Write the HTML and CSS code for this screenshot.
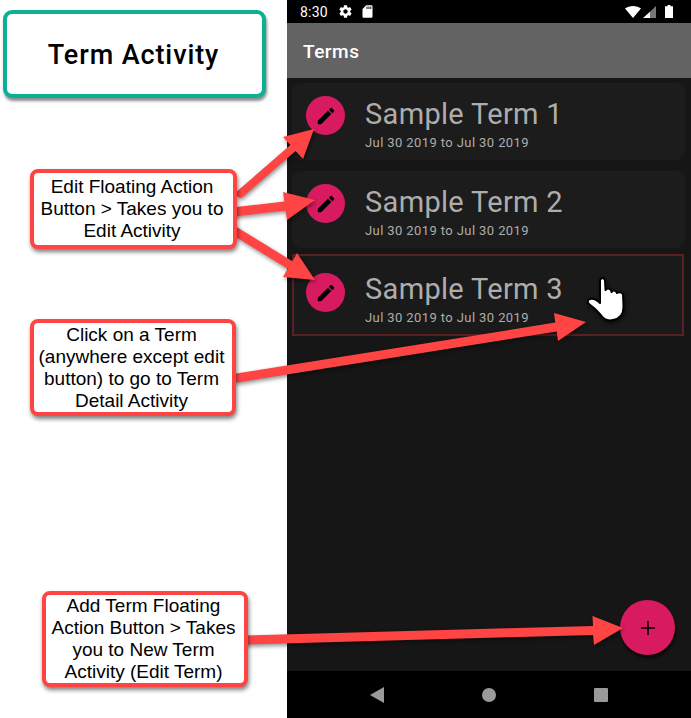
FILE: index.html
```html
<!DOCTYPE html>
<html lang="en">
<head>
<meta charset="utf-8">
<title>Term Activity</title>
<link rel="stylesheet" href="styles.css">
</head>
<body>
<div class="stage">
  <aside class="notes">
    <h1 class="title-box">Term Activity</h1>
    <p class="callout callout-edit">Edit Floating Action Button &gt; Takes you to Edit Activity</p>
    <p class="callout callout-click">Click on a Term (anywhere except edit button) to go to Term Detail Activity</p>
    <p class="callout callout-add">Add Term Floating Action Button &gt; Takes you to New Term Activity (Edit Term)</p>
  </aside>
  <main class="phone">
    <div class="status">
      <span class="time">8:30</span>
      <svg class="ic-gear" viewBox="0 0 24 24"><path d="M19.43 12.98c.04-.32.07-.64.07-.98s-.03-.66-.07-.98l2.11-1.65c.19-.15.24-.42.12-.64l-2-3.46c-.12-.22-.39-.3-.61-.22l-2.49 1c-.52-.4-1.08-.73-1.69-.98l-.38-2.65C14.46 2.18 14.25 2 14 2h-4c-.25 0-.46.18-.49.42l-.38 2.65c-.61.25-1.17.59-1.69.98l-2.49-1c-.23-.09-.49 0-.61.22l-2 3.46c-.13.22-.07.49.12.64l2.11 1.65c-.04.32-.07.65-.07.98s.03.66.07.98l-2.11 1.65c-.19.15-.24.42-.12.64l2 3.46c.12.22.39.3.61.22l2.49-1c.52.4 1.08.73 1.69.98l.38 2.65c.03.24.24.42.49.42h4c.25 0 .46-.18.49-.42l.38-2.65c.61-.25 1.17-.59 1.69-.98l2.49 1c.23.09.49 0 .61-.22l2-3.46c.12-.22.07-.49-.12-.64l-2.11-1.65zM12 15.5c-1.93 0-3.5-1.57-3.5-3.5s1.57-3.5 3.5-3.5 3.5 1.57 3.5 3.5-1.57 3.5-3.5 3.5z"/></svg>
      <svg class="ic-sd" viewBox="0 0 24 24"><path d="M18 2h-8L4 8v12c0 1.1.9 2 2 2h12c1.1 0 2-.9 2-2V4c0-1.1-.9-2-2-2zm-6 6h-1.5V4H12v4zm3 0h-1.5V4H15v4zm3 0h-1.5V4H18v4z"/></svg>
      <span class="status-gap"></span>
      <svg class="ic-wifi" viewBox="0 0 16 12"><path d="M0 2.6C2.2 1 5 0 8 0s5.800 1 8 2.600L8 12z"/></svg>
      <svg class="ic-signal" viewBox="0 0 13 12"><path class="sig-dim" d="M13 0v12H7V5.700z"/><path d="M7 5.700V12H0z"/></svg>
      <svg class="ic-batt" viewBox="0 0 8 13"><path d="M2.500 0h3v1.200H8V13H0V1.200h2.500z"/></svg>
    </div>
    <header class="appbar">Terms</header>
    <section class="list">
      <article class="card">
        <span class="edit"><svg viewBox="0 0 24 24"><path d="M3 17.250V21h3.750L17.810 9.940l-3.750-3.750L3 17.250zM20.710 7.040a1 1 0 0 0 0-1.410l-2.340-2.340a1 1 0 0 0-1.410 0l-1.830 1.830 3.750 3.750 1.830-1.830z"/></svg></span>
        <div class="card-text"><div class="term">Sample Term 1</div><div class="dates">Jul 30 2019 to Jul 30 2019</div></div>
      </article>
      <article class="card">
        <span class="edit"><svg viewBox="0 0 24 24"><path d="M3 17.250V21h3.750L17.810 9.940l-3.750-3.750L3 17.250zM20.710 7.040a1 1 0 0 0 0-1.410l-2.340-2.340a1 1 0 0 0-1.410 0l-1.830 1.830 3.750 3.750 1.830-1.830z"/></svg></span>
        <div class="card-text"><div class="term">Sample Term 2</div><div class="dates">Jul 30 2019 to Jul 30 2019</div></div>
      </article>
      <article class="card card-picked">
        <span class="edit"><svg viewBox="0 0 24 24"><path d="M3 17.250V21h3.750L17.810 9.940l-3.750-3.750L3 17.250zM20.710 7.040a1 1 0 0 0 0-1.410l-2.340-2.340a1 1 0 0 0-1.410 0l-1.830 1.830 3.750 3.750 1.830-1.830z"/></svg></span>
        <div class="card-text"><div class="term">Sample Term 3</div><div class="dates">Jul 30 2019 to Jul 30 2019</div></div>
      </article>
      <button class="fab" type="button"><svg viewBox="0 0 14 14"><path d="M6.200 0h1.600v6.200H14v1.600H7.800V14H6.200V7.800H0V6.200h6.200z"/></svg></button>
    </section>
    <nav class="navbar">
      <svg class="nav-ic" viewBox="0 0 16 16"><path d="M15 0v16L1 8z"/></svg>
      <svg class="nav-ic" viewBox="0 0 16 16"><circle cx="8" cy="8" r="7"/></svg>
      <svg class="nav-ic" viewBox="0 0 16 16"><rect x="1" y="1" width="14" height="14" rx="1"/></svg>
    </nav>
  </main>
  <svg class="overlay" viewBox="0 0 691 718">
    <g class="hand">
      <path d="M600 280Q602.500 276 605 280L605.500 290Q608 287 611 290L611.500 292Q614 289 616.500 292L617 293Q620 291 623 294L623.500 306Q624 318 613 320Q605 322 600 314Q596 309 589 304Q586 300 590 299Q595 298 600 303Z"/>
    </g>
    <g class="arrows">
      <path d="M237.400 191 290.400 145 283 137 314 129 303 159 295.600 151 242.600 197a4 4 0 0 1-5.200-6z"/>
      <path d="M232.400 207.500 284.400 201.500 283 192 315 200 287 220 285.600 210.500 233.600 216.500a4.500 4.500 0 0 1-1.200-9z"/>
      <path d="M235.300 226.200 292.300 261.200 297 253 315 280 283 277 287.700 268.800 230.700 233.800a4.500 4.500 0 0 1 4.600-7.600z"/>
      <path d="M236.300 373.600 555.300 322.600 554 313 586 322 558 341 556.700 331.400 237.700 382.400a4.500 4.500 0 0 1-1.400-8.800z"/>
      <path d="M246 635.500 593 626 592.500 616 623 628 594 645 593 635 246 644.500a4.500 4.500 0 0 1 0-9z"/>
    </g>
  </svg>
</div>
</body>
</html>
```
FILE: styles.css
```css
* { box-sizing: border-box; }
html, body { margin: 0; padding: 0; background: #fff; }
body { width: 691px; height: 718px; overflow: hidden; }

.stage {
  position: relative;
  display: grid;
  grid-template-columns: 287px 404px;
  width: 691px;
  height: 718px;
}

.notes { position: relative; background: #fff; }

.title-box {
  position: absolute;
  left: 3px;
  top: 10px;
  width: 263px;
  height: 88px;
  margin: 0;
  padding: 2px 2px 0 0;
  display: flex;
  align-items: center;
  justify-content: center;
  background: #fff;
  border: 4px solid #0bb193;
  border-radius: 9px;
  box-shadow: 1px 3px 3px rgba(0, 0, 0, .45);
  font: 500 27px/1 "Roboto", sans-serif;
  letter-spacing: .9px;
  color: #000;
}

.callout {
  position: absolute;
  z-index: 3;
  margin: 0;
  display: flex;
  align-items: center;
  justify-content: center;
  text-align: center;
  background: #fff;
  border: 4px solid #ff4444;
  border-radius: 8px;
  box-shadow: 1px 3px 4px rgba(0, 0, 0, .5);
  font: 400 19px/22px "Liberation Sans", sans-serif;
  color: #000;
}
.callout-edit { left: 30px; top: 169px; width: 207px; height: 80px; padding: 0 5px 0 2px; }
.callout-click { left: 30px; top: 319px; width: 206px; height: 97px; padding: 0 5px 0 2px; }
.callout-add { left: 42px; top: 591px; width: 206px; height: 96px; padding: 0 5px 0 2px; }

.phone {
  display: flex;
  flex-direction: column;
  height: 718px;
  background: #161616;
}

.status {
  flex: 0 0 23px;
  display: flex;
  align-items: center;
  padding: 0 18px 0 13px;
  background: #000;
  color: #fff;
  fill: #fff;
  font: 400 14px/1 "Roboto", sans-serif;
}
.time { margin-right: 10px; letter-spacing: .2px; }
.ic-gear { width: 15px; height: 15px; margin-right: 7px; }
.ic-sd { width: 15px; height: 15px; }
.status-gap { flex: 1; }
.ic-wifi { width: 16px; height: 12px; margin-right: 2px; }
.ic-signal { width: 13px; height: 12px; margin-right: 9px; }
.sig-dim { fill: #777; }
.ic-batt { width: 8px; height: 13px; }

.appbar {
  flex: 0 0 55px;
  display: flex;
  align-items: center;
  padding: 2px 0 0 16px;
  background: #636363;
  color: #fff;
  font: 500 19px/1 "Roboto", sans-serif;
  letter-spacing: .5px;
}

.list {
  position: relative;
  flex: 1;
  display: flex;
  flex-direction: column;
  padding: 5px 6px 0 5px;
}

.card {
  display: flex;
  align-items: flex-start;
  gap: 20px;
  height: 77px;
  margin-bottom: 11px;
  padding: 13px 14px;
  background: #1c1c1c;
  border-radius: 9px;
}
.card + .card-picked {
  height: 82px;
  margin: -5px 1px 0 0;
  padding: 17px 12px;
  background: #1a1a1a;
  border: 2px solid #5a2020;
  border-radius: 0;
}
.card-picked .card-text { margin-top: -2px; }

.edit {
  flex: 0 0 39px;
  width: 39px;
  height: 39px;
  display: flex;
  align-items: center;
  justify-content: center;
  background: #d81b60;
  border-radius: 50%;
}
.edit svg { width: 22px; height: 22px; fill: #000; }

.term {
  font: 400 29px/36px "Roboto", sans-serif;
  letter-spacing: .32px;
  color: #adadad;
}
.dates {
  margin-top: 2px;
  font: 400 13px/18px "Roboto", sans-serif;
  letter-spacing: .4px;
  color: #adadad;
}

.fab {
  position: absolute;
  right: 16px;
  bottom: 16px;
  width: 55px;
  height: 55px;
  display: flex;
  align-items: center;
  justify-content: center;
  padding: 0;
  border: 0;
  background: #d81b60;
  border-radius: 50%;
  box-shadow: 1px 3px 3px rgba(0, 0, 0, .7);
}
.fab svg { width: 14px; height: 14px; fill: #000; }

.navbar {
  flex: 0 0 47px;
  display: flex;
  align-items: center;
  justify-content: center;
  gap: 96px;
  background: #000;
  fill: #9a9a9a;
}
.nav-ic { width: 16px; height: 16px; }

.overlay {
  position: absolute;
  left: 0;
  top: 0;
  z-index: 2;
  width: 691px;
  height: 718px;
  pointer-events: none;
}
.arrows { fill: #ff4444; filter: drop-shadow(1px 2px 2px rgba(0, 0, 0, .45)); }
.hand { fill: #fff; stroke: #000; stroke-width: 2; stroke-linejoin: round; filter: drop-shadow(1px 2px 2px rgba(0, 0, 0, .6)); }
```
